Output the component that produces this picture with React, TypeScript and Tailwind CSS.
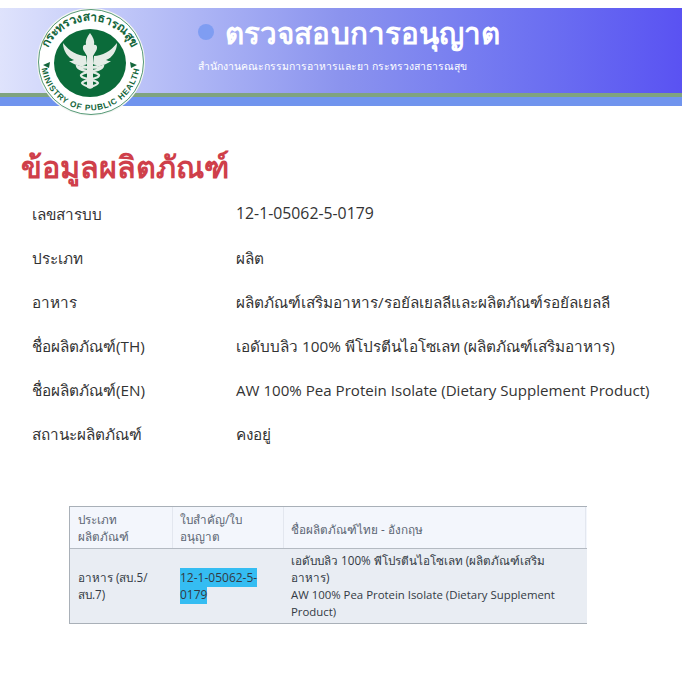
const font = "[font-family:'Open_Sans','Noto_Sans',sans-serif]";

const rows: [string, string, string][] = [
  ["เลขสารบบ", "12-1-05062-5-0179", "text-[15.8px]"],
  ["ประเภท", "ผลิต", "text-[15.3px]"],
  ["อาหาร", "ผลิตภัณฑ์เสริมอาหาร/รอยัลเยลลีและผลิตภัณฑ์รอยัลเยลลี", "text-[15.3px]"],
  ["ชื่อผลิตภัณฑ์(TH)", "เอดับบลิว 100% พีโปรตีนไอโซเลท (ผลิตภัณฑ์เสริมอาหาร)", "text-[15.3px]"],
  ["ชื่อผลิตภัณฑ์(EN)", "AW 100% Pea Protein Isolate (Dietary Supplement Product)", "text-[15.1px]"],
  ["สถานะผลิตภัณฑ์", "คงอยู่", "text-[15.3px]"],
];

function Logo() {
  return (
    <svg width="110" height="110" viewBox="0 0 110 110" className="shrink-0">
      <defs>
        <path id="top" d="M 8 60 A 46 46 0 0 1 100 60" />
        <path id="bottom" d="M 5 54 A 49.5 49.5 0 0 0 104 54" />
      </defs>
      <circle cx="55" cy="55" r="54" fill="#f4f6f3" />
      <circle cx="55" cy="55" r="52.5" fill="#ffffff" stroke="#2c8055" strokeWidth="0.8" />
      <ellipse cx="54" cy="56" rx="36" ry="34" fill="#0b6b3a" />
      <text fontSize="12" fontWeight="700" fill="#14663c" fontFamily="'Noto Sans',sans-serif">
        <textPath href="#top" startOffset="50%" textAnchor="middle">กระทรวงสาธารณสุข</textPath>
      </text>
      <text fontSize="8.2" fontWeight="700" fill="#14663c" fontFamily="'Liberation Sans',sans-serif" letterSpacing="0.8">
        <textPath href="#bottom" startOffset="50%" textAnchor="middle">MINISTRY OF PUBLIC HEALTH</textPath>
      </text>
      <path d="M7 58l7-3-1 6zM101 58l-7-3 1 6z" fill="#14663c" />
      <g fill="#e4ece6">
        <path d="M54 26c3 4 5 8 4 12 3-1 4 3 2 6l-3 5v31c0 2-6 2-6 0V49l-3-5c-2-3-1-7 2-6-1-4 1-8 4-12z" />
        <path d="M50 49C42 49 33 44 27 36c0 8 5 15 11 17-2 1-3 1-5 1 5 4 12 6 18 3zM58 49c8 0 17-5 23-13 0 8-5 15-11 17 2 1 3 1 5 1-5 4-12 6-18 3z" />
      </g>
      <g fill="none" stroke="#e4ece6" strokeWidth="2.2">
        <path d="M41 56c6 5 20 6 26 3-1 6-20 5-22 9-1 4 15 4 17 8-1 3-8 3-9 5" />
        <path d="M67 56c-6 5-20 6-26 3 1 6 20 5 22 9 1 4-15 4-17 8 1 3 8 3 9 5" />
      </g>
    </svg>
  );
}

export default function App() {
  return (
    <div className={`w-[682px] h-[682px] bg-white overflow-hidden pt-2 ${font}`}>
      <header className="relative h-[98px]">
        <div className="h-[85px] bg-gradient-to-r from-[#dfe3fc] via-[#8b93ee] via-50% to-[#5a52f2] flex pl-[198px]">
          <div>
            <div className="flex items-center h-[51px]">
              <span className="w-4 h-4 rounded-full bg-[#7f9df2] mr-[11px] -mt-[3px]" />
              <h1 className="text-[29.6px] font-semibold text-white tracking-[0.1px] whitespace-nowrap">ตรวจสอบการอนุญาต</h1>
            </div>
            <p className="text-[10.4px] text-white whitespace-nowrap">สำนักงานคณะกรรมการอาหารและยา กระทรวงสาธารณสุข</p>
          </div>
        </div>
        <div className="h-1 bg-[#7fa37f]" />
        <div className="h-[9px] bg-[#7094ee]" />
        <div className="absolute left-[36px] top-[-1px]">
          <Logo />
        </div>
      </header>

      <main>
        <h2 className="ml-[21px] mt-[41px] text-[30.5px] leading-[38px] font-bold text-[#cf3f4a] whitespace-nowrap">ข้อมูลผลิตภัณฑ์</h2>
        <dl className="mt-[7px]">
          {rows.map(([k, v, size]) => (
            <div key={k} className="flex h-[44px] items-center text-[#333333]">
              <dt className="w-[204px] ml-[32px] shrink-0 text-[15.3px]">{k}</dt>
              <dd className={`whitespace-nowrap ${size}`}>{v}</dd>
            </div>
          ))}
        </dl>

        <div className="ml-[69px] mt-[50px] w-[518px] text-[11.7px] leading-[17px] border-t border-b border-l border-[#a9b0b8]">
          <div className="flex h-[42px] bg-[#f3f6fc] border-b border-[#b4bac2] text-[#5a6472]">
            <div className="w-[103px] px-2 flex items-center border-r border-[#e3e7ef]">ประเภท<br />ผลิตภัณฑ์</div>
            <div className="w-[111px] px-[7px] flex items-center border-r border-[#e3e7ef]">ใบสำคัญ/ใบ<br />อนุญาต</div>
            <div className="w-[302px] px-[7px] pt-1 flex items-center border-r border-[#e3e7ef]">ชื่อผลิตภัณฑ์ไทย - อังกฤษ</div>
          </div>
          <div className="flex h-[74px] bg-[#e9edf3] text-[#333a44]">
            <div className="w-[103px] px-2 flex items-center">อาหาร (สบ.5/<br />สบ.7)</div>
            <div className="w-[111px] px-[7px] flex items-center text-[12px]">
              <span><span className="bg-[#35bdf2] py-px">12-1-05062-5-</span><br /><span className="bg-[#35bdf2] py-px">0179</span></span>
            </div>
            <div className="w-[302px] px-[7px] flex items-center">
              <p className="w-[280px]">เอดับบลิว 100% พีโปรตีนไอโซเลท (ผลิตภัณฑ์เสริม อาหาร)<br /><span className="text-[11.4px]">AW 100% Pea Protein Isolate (Dietary Supplement Product)</span></p>
            </div>
          </div>
        </div>
      </main>
    </div>
  );
}
